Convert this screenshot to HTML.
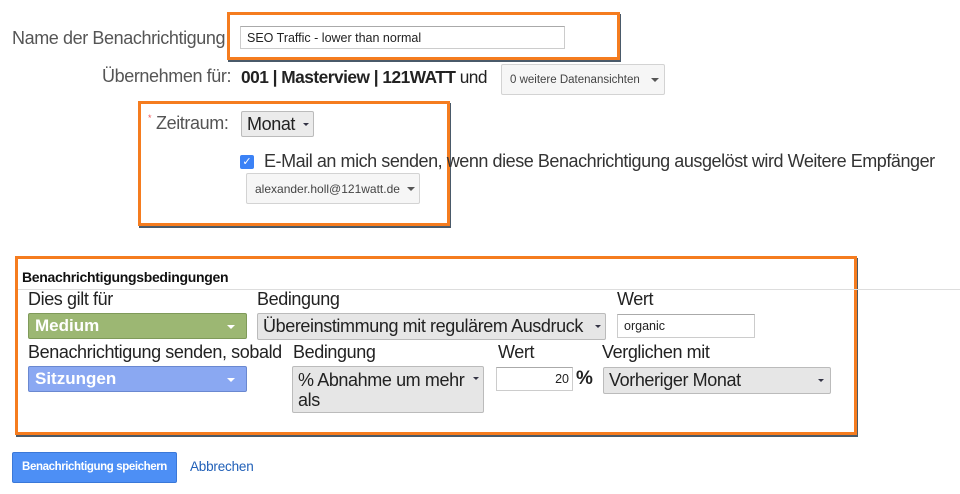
<!DOCTYPE html><html><head><meta charset="utf-8"><style>
*{margin:0;padding:0;box-sizing:border-box}
body{width:960px;height:494px;background:#fff;position:relative;overflow:hidden;font-family:"Liberation Sans",sans-serif;color:#222}
.a{position:absolute;white-space:nowrap}
.l{font-size:18px;letter-spacing:-0.4px;color:#555}
.ob{position:absolute;border:3px solid #f57c1f;box-shadow:1px 2px 0 #4a5a6a}
.dd{position:absolute;background:#f1f1f1;border:1px solid #d3d3d3;border-radius:2px;font-size:12px;color:#444;padding-left:8px;display:flex;align-items:center;white-space:nowrap}
.tri{position:absolute;width:0;height:0;border-left:4px solid transparent;border-right:4px solid transparent;border-top:4px solid #555}
.inp{position:absolute;border:1px solid #ccc;border-top-color:#aaa;background:#fff;font-size:12px;padding-left:6px;display:flex;align-items:center}
.t{font-size:18px;letter-spacing:-0.4px;color:#222}
</style></head><body>
<div class="ob" style="left:227px;top:12px;width:393px;height:48px"></div>
<div class="ob" style="left:138px;top:101px;width:312px;height:125px"></div>
<div class="ob" style="left:15px;top:256px;width:842px;height:179px"></div>
<div class="a" style="left:857px;top:289px;width:103px;height:1px;background:#ddd"></div>
<div class="a" style="left:18px;top:289px;width:839px;height:1px;background:#ddd"></div>

<div class="a l" style="left:12px;top:28px">Name der Benachrichtigung</div>
<div class="inp" style="left:240px;top:26px;width:325px;height:23px;color:#222;font-size:12.5px">SEO Traffic - lower than normal</div>

<div class="a l" style="left:102px;top:66px">Übernehmen für:</div>
<div class="a t" style="left:241px;top:67px;font-size:17.3px;letter-spacing:-0.5px"><b>001 | Masterview | 121WATT</b> und</div>
<div class="dd" style="left:501px;top:64px;width:164px;height:31px;background:#f6f6f6;font-size:11.5px">0 weitere Datenansichten<span class="tri" style="left:149px;top:13px"></span></div>

<div class="a" style="left:148px;top:113px;color:#e55;font-size:9px">*</div>
<div class="a l" style="left:156px;top:113px">Zeitraum:</div>
<div class="dd" style="left:241px;top:111px;width:73px;height:26px;background:#ebebeb;border-color:#bbb;font-size:18px;letter-spacing:-0.4px;color:#222;padding-left:5px">Monat<span class="tri" style="left:61px;top:11px;border-top-color:#334;border-width:3px"></span></div>

<div class="a" style="left:240px;top:155px;width:14px;height:14px;background:#3b82f6;border-radius:2px;color:#fff;font-size:11px;text-align:center;line-height:14px">✓</div>
<div class="a t" style="left:264px;top:151px;color:#333;letter-spacing:-0.45px">E-Mail an mich senden, wenn diese Benachrichtigung ausgelöst wird Weitere Empfänger</div>
<div class="dd" style="left:246px;top:173px;width:174px;height:31px;background:#f6f6f6;font-size:12px">alexander.holl@121watt.de<span class="tri" style="left:160px;top:13px"></span></div>

<div class="a" style="left:22px;top:269px;font-size:14px;font-weight:bold;letter-spacing:-0.3px;color:#111">Benachrichtigungsbedingungen</div>
<div class="a t" style="left:28px;top:289px">Dies gilt für</div>
<div class="a t" style="left:257px;top:289px">Bedingung</div>
<div class="a t" style="left:617px;top:289px">Wert</div>
<div class="dd" style="left:28px;top:313px;width:219px;height:26px;background:#9cb773;border-color:#7f9a5a;color:#fff;font-weight:bold;font-size:17px;padding-left:6px">Medium<span class="tri" style="left:198px;top:11px;border-top-color:#fff"></span></div>
<div class="dd" style="left:257px;top:313px;width:349px;height:27px;background:#e6e6e6;border-color:#bbb;color:#222;font-size:18px;letter-spacing:-0.4px;padding-left:5px">Übereinstimmung mit regulärem Ausdruck<span class="tri" style="left:337px;top:11px;border-top-color:#334;border-width:3px"></span></div>
<div class="inp" style="left:617px;top:314px;width:138px;height:24px;font-size:12.5px;color:#222">organic</div>

<div class="a t" style="left:28px;top:342px">Benachrichtigung senden, sobald</div>
<div class="a t" style="left:293px;top:342px">Bedingung</div>
<div class="a t" style="left:498px;top:342px">Wert</div>
<div class="a t" style="left:602px;top:342px">Verglichen mit</div>
<div class="dd" style="left:28px;top:366px;width:219px;height:26px;background:#8aa8f2;border-color:#6a88d0;color:#fff;font-weight:bold;font-size:17px;padding-left:6px">Sitzungen<span class="tri" style="left:198px;top:11px;border-top-color:#fff"></span></div>
<div class="dd" style="left:292px;top:366px;width:192px;height:47px;background:#e6e6e6;border-color:#bbb;color:#222;font-size:18px;letter-spacing:-0.4px;padding-left:5px;align-items:flex-start;padding-top:3px;line-height:20px;white-space:normal">% Abnahme um mehr<br>als<span class="tri" style="left:180px;top:10px;border-top-color:#334;border-width:3px"></span></div>
<div class="inp" style="left:496px;top:367px;width:77px;height:24px;justify-content:flex-end;padding-right:3px;font-size:12.5px;color:#222">20</div>
<div class="a" style="left:576px;top:368px;font-size:19px;font-weight:bold;color:#222">%</div>
<div class="dd" style="left:603px;top:367px;width:228px;height:27px;background:#e6e6e6;border-color:#bbb;color:#222;font-size:18px;letter-spacing:-0.4px;padding-left:5px">Vorheriger Monat<span class="tri" style="left:214px;top:11px;border-top-color:#334;border-width:3px"></span></div>

<div class="a" style="left:12px;top:452px;width:165px;height:31px;background:#4d8ff5;border:1px solid #3a78d8;border-radius:2px;color:#fff;font-size:11.5px;font-weight:bold;letter-spacing:-0.4px;text-align:center;line-height:29px">Benachrichtigung speichern</div>
<div class="a" style="left:190px;top:459px;font-size:13.5px;color:#2160b8;letter-spacing:-0.2px">Abbrechen</div>
</body></html>
